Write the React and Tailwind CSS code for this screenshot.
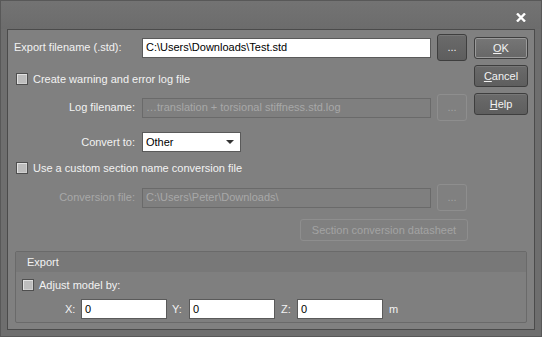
import React from "react";

const Check = ({ label }) => (
  <label className="flex items-center h-[16px]">
    <span className="w-[12px] h-[12px] border border-[#4f4f4f] bg-[#bdbdbd] shadow-[inset_1px_1px_0_#e2e2e2,inset_-1px_-1px_0_#cfcfcf]" />
    <span className="ml-[5px] text-[#f2f2f2]">{label}</span>
  </label>
);

const Button = ({ children, primary, disabled, className = "" }) => (
  <div
    className={
      "flex items-center justify-center rounded-[3px] border whitespace-nowrap " +
      (disabled
        ? "border-[#8e8e8e] bg-[#808080] text-[#a3a3a3] "
        : primary
        ? "border-[#3e3e3e] bg-gradient-to-b from-[#767676] to-[#676767] text-[#f2f2f2] shadow-[inset_0_0_0_1px_#9a9a9a] "
        : "border-[#3e3e3e] bg-gradient-to-b from-[#6a6a6a] to-[#5e5e5e] text-[#f2f2f2] shadow-[inset_0_1px_0_#777] ") +
      className
    }
  >
    {children}
  </div>
);

const Field = ({ value, disabled, className = "" }) => (
  <div
    className={
      "h-[20px] flex items-center px-[3px] border whitespace-nowrap overflow-hidden " +
      (disabled
        ? "border-[#6a6a6a] bg-[#7f7f7f] text-[#a8a8a8] "
        : "border-[#5a5a5a] bg-white text-black ") +
      className
    }
  >
    {value}
  </div>
);

export default function App() {
  return (
    <div className="w-[542px] h-[337px] bg-[#6e6e6e] border border-[#585858] flex flex-col font-['Liberation_Sans',Arial,sans-serif] text-[11px] leading-none">
      {/* Title bar */}
      <div className="h-[28px] flex items-center justify-end pr-[15px] bg-gradient-to-b from-[#737373] to-[#6c6c6c]">
        <svg width="10" height="9" viewBox="0 0 10 9" className="mt-[5px]">
          <path d="M1 0.5 L9 8.5 M9 0.5 L1 8.5" stroke="#ffffff" strokeWidth="2.4" />
        </svg>
      </div>

      {/* Main panel */}
      <div className="mx-[6px] h-[301px] border border-[#4b4b4b] bg-[#808080] flex flex-col">
        <div className="flex pt-[4px] pl-[6px] pr-[6px]">
          {/* Left form */}
          <div className="flex-1 flex flex-col">
            <div className="h-[27px] flex items-center">
              <span className="w-[128px] text-[#f2f2f2]">Export filename (.std):</span>
              <Field value="C:\Users\Downloads\Test.std" className="w-[289px]" />
              <Button className="ml-[6px] w-[30px] h-[27px]">...</Button>
            </div>

            <div className="mt-[10px] pl-[2px]">
              <Check label="Create warning and error log file" />
            </div>

            <div className="mt-[7px] h-[27px] flex items-center">
              <span className="w-[128px] pr-[7px] text-right text-[#f2f2f2]">Log filename:</span>
              <Field disabled value="…translation + torsional stiffness.std.log" className="w-[289px]" />
              <Button disabled className="ml-[6px] w-[30px] h-[27px]">...</Button>
            </div>

            <div className="mt-[11px] h-[20px] flex items-center">
              <span className="w-[128px] pr-[7px] text-right text-[#f2f2f2]">Convert to:</span>
              <div className="w-[99px] h-[20px] flex items-center justify-between px-[3px] border border-[#5a5a5a] bg-white text-black">
                <span>Other</span>
                <svg width="8" height="4" viewBox="0 0 8 4" className="mr-[3px]">
                  <path d="M0 0 H8 L4 4 Z" fill="#333" />
                </svg>
              </div>
            </div>

            <div className="mt-[8px] pl-[2px]">
              <Check label="Use a custom section name conversion file" />
            </div>

            <div className="mt-[8px] h-[27px] flex items-center">
              <span className="w-[128px] pr-[7px] text-right text-[#a8a8a8]">Conversion file:</span>
              <Field disabled value="C:\Users\Peter\Downloads\" className="w-[289px]" />
              <Button disabled className="ml-[6px] w-[30px] h-[27px]">...</Button>
            </div>

            <div className="mt-[8px] flex justify-end">
              <Button disabled className="w-[168px] h-[22px]">Section conversion datasheet</Button>
            </div>
          </div>

          {/* Right buttons */}
          <div className="w-[54px] ml-[6px] pt-[3px] flex flex-col gap-[6px]">
            <Button primary className="h-[22px]">
              <span><span className="underline">O</span>K</span>
            </Button>
            <Button className="h-[22px]">
              <span><span className="underline">C</span>ancel</span>
            </Button>
            <Button className="h-[22px]">
              <span><span className="underline">H</span>elp</span>
            </Button>
          </div>
        </div>

        {/* Export group */}
        <div className="mt-[10px] mx-[7px] h-[72px] border border-[#6a6a6a] rounded-[2px] bg-[#7f7f7f] flex flex-col">
          <div className="h-[20px] bg-[#787878] flex items-center pl-[11px] text-[#f2f2f2]">Export</div>
          <div className="pt-[5px] pl-[6px]">
            <Check label="Adjust model by:" />
          </div>
          <div className="mt-[6px] pl-[49px] flex items-center text-[#f2f2f2]">
            <span className="w-[16px]">X:</span>
            <Field value="0" className="w-[86px]" />
            <span className="ml-[5px] w-[17px]">Y:</span>
            <Field value="0" className="w-[86px]" />
            <span className="ml-[6px] w-[16px]">Z:</span>
            <Field value="0" className="w-[86px]" />
            <span className="ml-[6px]">m</span>
          </div>
        </div>
      </div>
    </div>
  );
}
